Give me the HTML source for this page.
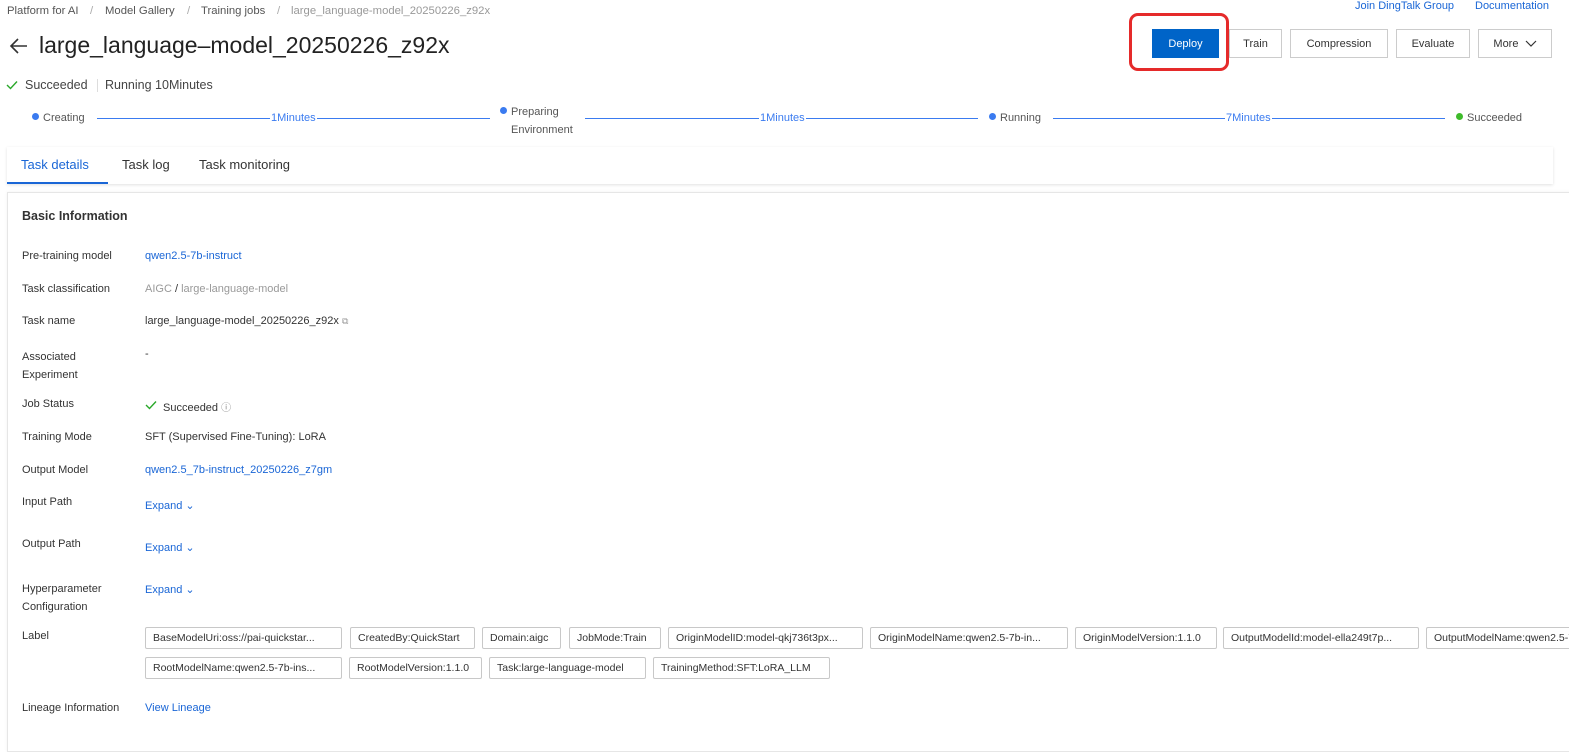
<!DOCTYPE html>
<html><head><meta charset="utf-8"><style>
*{margin:0;padding:0;box-sizing:border-box}
body{width:1569px;height:739px;overflow:hidden;background:#fff;font-family:"Liberation Sans",Arial,sans-serif;color:#333;position:relative;font-size:11px}
.a{position:absolute;white-space:nowrap}
.bc{top:5px;font-size:11.3px;color:#555}
.link{color:#1a66d6}
.btn{position:absolute;top:29px;height:29px;border:1px solid #ccc;background:#fff;font-size:11px;color:#333;display:flex;align-items:center;justify-content:center}
.lbl{font-size:11px;color:#333}
.tag{position:absolute;height:22px;border:1px solid #c8c8c8;border-radius:2px;font-size:10.5px;padding:0 7px;line-height:20px;white-space:nowrap;overflow:hidden;color:#333}
.dot{display:inline-block;width:7px;height:7px;border-radius:50%;background:#3a7bf0;margin-right:4px;vertical-align:1px}
.ln{position:absolute;height:1px;background:#3a7bf0;top:118px}
.dur{position:absolute;top:112px;color:#3a7bf0;font-size:11px;background:#fff;padding:0 1px}
</style></head><body>
<div class="a bc" style="left:7px">Platform for AI</div>
<div class="a bc" style="left:90px;color:#aaa">/</div>
<div class="a bc" style="left:105px">Model Gallery</div>
<div class="a bc" style="left:187px;color:#aaa">/</div>
<div class="a bc" style="left:201px">Training jobs</div>
<div class="a bc" style="left:277px;color:#aaa">/</div>
<div class="a bc" style="left:291px;color:#999">large_language-model_20250226_z92x</div>
<div class="a link" style="left:1355px;top:0px;font-size:11px">Join DingTalk Group</div>
<div class="a link" style="left:1475px;top:0px;font-size:11px">Documentation</div>
<svg class="a" style="left:9px;top:37px" width="20" height="18" viewBox="0 0 20 18"><path d="M18 9H2M9 2L2 9l7 7" stroke="#333" stroke-width="1.6" fill="none"/></svg>
<div class="a" style="left:39px;top:32px;font-size:23px;color:#222">large_language–model_20250226_z92x</div>
<div class="a" style="left:1129px;top:13px;width:100px;height:58px;border:3px solid #e52a2a;border-radius:9px"></div>
<div class="btn" style="left:1152px;width:67px;background:#0064c8;border-color:#0064c8;color:#fff">Deploy</div>
<div class="btn" style="left:1229px;width:53px">Train</div>
<div class="btn" style="left:1290px;width:98px">Compression</div>
<div class="btn" style="left:1396px;width:74px">Evaluate</div>
<div class="btn" style="left:1478px;width:74px">More&nbsp;&nbsp;<svg width="12" height="8" viewBox="0 0 12 8"><path d="M1 1l5 5 5-5" stroke="#333" fill="none" stroke-width="1.2"/></svg></div>
<svg class="a" style="left:6px;top:80px" width="12" height="10"><path d="M1 5l3.5 3.5L11 1.5" stroke="#2aa82a" stroke-width="1.4" fill="none"/></svg>
<div class="a" style="left:25px;top:78px;font-size:12.5px;color:#444">Succeeded</div>
<div class="a" style="left:97px;top:79px;width:1px;height:13px;background:#ddd"></div>
<div class="a" style="left:105px;top:78px;font-size:12.5px;color:#444">Running 10Minutes</div>
<div class="a" style="left:32px;top:112px;color:#555"><span class="dot"></span>Creating</div>
<div class="ln" style="left:97px;width:393px"></div><div class="dur" style="left:270px">1Minutes</div>
<div class="a" style="left:500px;top:103px;color:#555;line-height:18px"><span class="dot"></span>Preparing<br><span style="margin-left:11px">Environment</span></div>
<div class="ln" style="left:585px;width:393px"></div><div class="dur" style="left:759px">1Minutes</div>
<div class="a" style="left:989px;top:112px;color:#555"><span class="dot"></span>Running</div>
<div class="ln" style="left:1053px;width:392px"></div><div class="dur" style="left:1225px">7Minutes</div>
<div class="a" style="left:1456px;top:112px;color:#555"><span class="dot" style="background:#3fbb2b"></span>Succeeded</div>
<div class="a" style="left:7px;top:147px;width:1546px;height:37px;box-shadow:0 1px 3px rgba(0,0,0,.12);background:#fff"></div>
<div class="a" style="left:21px;top:157px;font-size:13px;color:#1a66d6">Task details</div>
<div class="a" style="left:7px;top:182px;width:101px;height:2px;background:#1a66d6"></div>
<div class="a" style="left:122px;top:157px;font-size:13px;color:#333">Task log</div>
<div class="a" style="left:199px;top:157px;font-size:13px;color:#333">Task monitoring</div>
<div class="a" style="left:7px;top:192px;width:1570px;height:560px;border:1px solid #e6e6e6;box-shadow:0 0 3px rgba(0,0,0,.06)"></div>
<div class="a" style="left:22px;top:209px;font-size:12.5px;font-weight:bold;color:#333">Basic Information</div>
<div class="a lbl" style="left:22px;top:250px">Pre-training model</div><div class="a link" style="left:145px;top:250px">qwen2.5-7b-instruct</div>
<div class="a lbl" style="left:22px;top:283px">Task classification</div><div class="a" style="left:145px;top:283px;color:#999">AIGC <span style="color:#333">/</span> large-language-model</div>
<div class="a lbl" style="left:22px;top:315px">Task name</div><div class="a" style="left:145px;top:315px">large_language-model_20250226_z92x <span style="color:#999;font-size:9px">⧉</span></div>
<div class="a lbl" style="left:22px;top:348px;line-height:18px">Associated<br>Experiment</div><div class="a" style="left:145px;top:348px">-</div>
<div class="a lbl" style="left:22px;top:398px">Job Status</div>
<svg class="a" style="left:145px;top:400px" width="12" height="10"><path d="M1 5l3.5 3.5L11 1.5" stroke="#2aa82a" stroke-width="1.4" fill="none"/></svg>
<div class="a" style="left:163px;top:399px">Succeeded <span style="color:#888;font-size:10px">ⓘ</span></div>
<div class="a lbl" style="left:22px;top:431px">Training Mode</div><div class="a" style="left:145px;top:431px">SFT (Supervised Fine-Tuning): LoRA</div>
<div class="a lbl" style="left:22px;top:464px">Output Model</div><div class="a link" style="left:145px;top:464px">qwen2.5_7b-instruct_20250226_z7gm</div>
<div class="a lbl" style="left:22px;top:496px">Input Path</div><div class="a link" style="left:145px;top:499px">Expand ⌄</div>
<div class="a lbl" style="left:22px;top:538px">Output Path</div><div class="a link" style="left:145px;top:541px">Expand ⌄</div>
<div class="a lbl" style="left:22px;top:580px;line-height:18px">Hyperparameter<br>Configuration</div><div class="a link" style="left:145px;top:583px">Expand ⌄</div>
<div class="a lbl" style="left:22px;top:630px">Label</div>
<div class="tag" style="left:145px;top:627px;width:197px">BaseModelUri:oss://pai-quickstar...</div>
<div class="tag" style="left:350px;top:627px;width:125px">CreatedBy:QuickStart</div>
<div class="tag" style="left:482px;top:627px;width:79px">Domain:aigc</div>
<div class="tag" style="left:569px;top:627px;width:92px">JobMode:Train</div>
<div class="tag" style="left:668px;top:627px;width:195px">OriginModelID:model-qkj736t3px...</div>
<div class="tag" style="left:870px;top:627px;width:198px">OriginModelName:qwen2.5-7b-in...</div>
<div class="tag" style="left:1075px;top:627px;width:142px">OriginModelVersion:1.1.0</div>
<div class="tag" style="left:1223px;top:627px;width:196px">OutputModelId:model-ella249t7p...</div>
<div class="tag" style="left:1426px;top:627px;width:160px">OutputModelName:qwen2.5-7b</div>
<div class="tag" style="left:145px;top:657px;width:197px">RootModelName:qwen2.5-7b-ins...</div>
<div class="tag" style="left:349px;top:657px;width:133px">RootModelVersion:1.1.0</div>
<div class="tag" style="left:489px;top:657px;width:157px">Task:large-language-model</div>
<div class="tag" style="left:653px;top:657px;width:177px">TrainingMethod:SFT:LoRA_LLM</div>
<div class="a lbl" style="left:22px;top:702px">Lineage Information</div><div class="a link" style="left:145px;top:702px">View Lineage</div>
</body></html>
